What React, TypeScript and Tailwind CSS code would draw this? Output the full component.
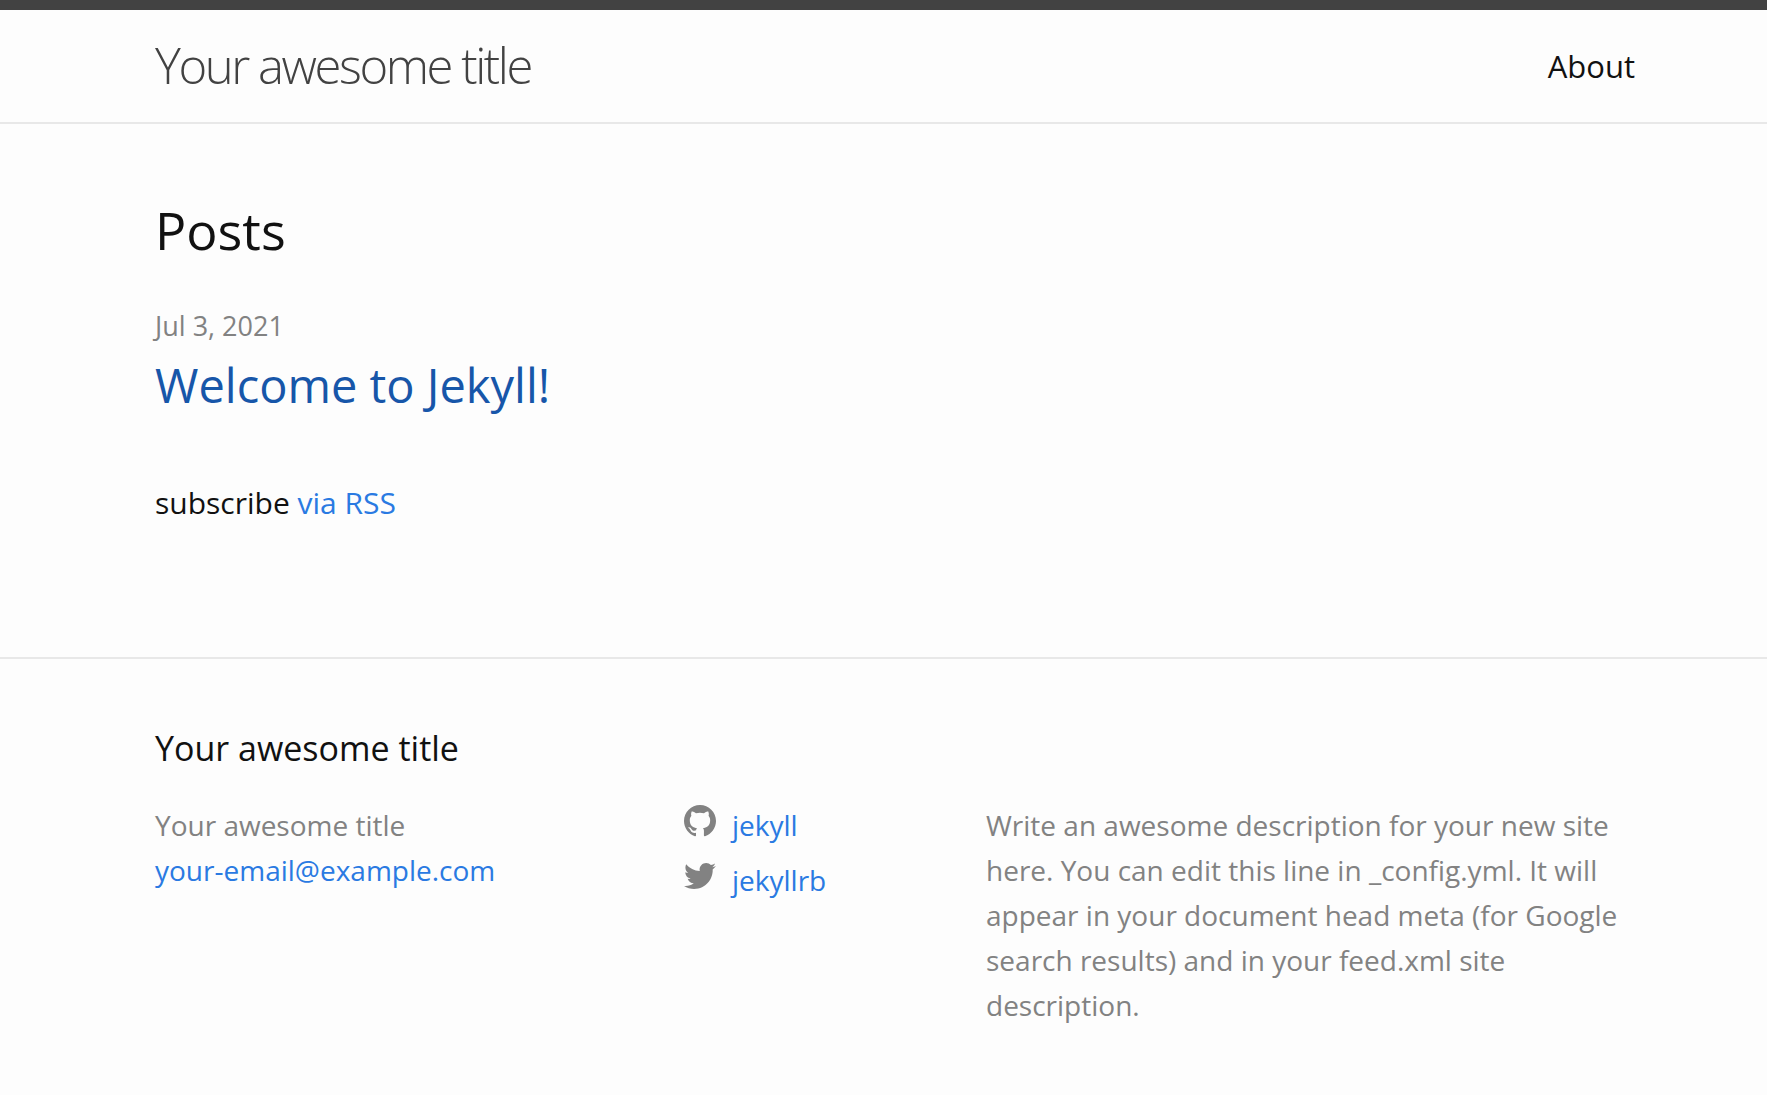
const description =
  "Write an awesome description for your new site here. You can edit this line in _config.yml. It will appear in your document head meta (for Google search results) and in your feed.xml site description.";

const github =
  "M8 0C3.58 0 0 3.582 0 8c0 3.535 2.292 6.533 5.47 7.59.4.075.547-.172.547-.385 0-.19-.007-.693-.01-1.36-2.226.483-2.695-1.073-2.695-1.073-.364-.924-.89-1.17-.89-1.17-.725-.496.056-.486.056-.486.803.056 1.225.824 1.225.824.714 1.223 1.873.87 2.33.665.072-.517.278-.87.507-1.07-1.777-.2-3.644-.888-3.644-3.953 0-.873.31-1.587.823-2.147-.09-.202-.36-1.015.07-2.117 0 0 .67-.215 2.2.82.64-.178 1.32-.266 2-.27.68.004 1.36.092 2 .27 1.52-1.035 2.19-.82 2.19-.82.43 1.102.16 1.915.08 2.117.51.56.82 1.274.82 2.147 0 3.073-1.87 3.75-3.65 3.947.28.24.54.73.54 1.48 0 1.07-.01 1.93-.01 2.19 0 .21.14.46.55.38C13.71 14.53 16 11.53 16 8c0-4.418-3.582-8-8-8";
const twitter =
  "M15.969 3.058c-.586.26-1.217.436-1.878.515.675-.405 1.194-1.045 1.438-1.809-.632.375-1.332.647-2.076.793-.596-.636-1.446-1.033-2.387-1.033-1.806 0-3.27 1.464-3.27 3.27 0 .256.029.506.085.745-2.718-.136-5.127-1.438-6.74-3.416-.281.483-.443 1.045-.443 1.644 0 1.134.577 2.135 1.455 2.722-.536-.017-1.04-.164-1.481-.409v.041c0 1.584 1.127 2.906 2.623 3.206-.274.075-.563.115-.861.115-.211 0-.416-.02-.615-.059.416 1.299 1.624 2.245 3.055 2.271-1.119.877-2.529 1.4-4.061 1.4-.264 0-.524-.015-.78-.046 1.447.928 3.166 1.469 5.013 1.469 6.015 0 9.304-4.983 9.304-9.304 0-.142-.003-.283-.009-.423.639-.461 1.193-1.037 1.632-1.692z";

function Social({ name, path }: { name: string; path: string }) {
  return (
    <li className="h-[55px]">
      <a href={"#" + name} className="flex gap-4 text-[#2a7ae2]">
        <svg viewBox="0 0 16 16" aria-hidden="true" className="mt-[2px] size-8 fill-[#828282]">
          <path d={path} />
        </svg>
        <span>{name}</span>
      </a>
    </li>
  );
}

export default function App() {
  return (
    <div className="min-h-screen bg-[#fdfdfd] font-['Open_Sans','Noto_Sans',sans-serif] text-[#111]">
      <header className="border-t-10 border-b-2 border-t-[#424242] border-b-[#e8e8e8]">
        <div className="flex h-28 items-center justify-between pr-[132px] pl-[155px]">
          <a href="#home" className="text-[49px] font-light tracking-tighter text-[#424242]">
            Your awesome title
          </a>
          <nav>
            <a href="#about" className="text-[31px]">About</a>
          </nav>
        </div>
      </header>
      <main className="px-[155px] pt-[68px] pb-[130px]">
        <h1 className="text-[52px] leading-[76px]">Posts</h1>
        <ul className="mt-10">
          <li>
            <time className="block text-[27px] leading-9 text-[#828282]">Jul 3, 2021</time>
            <h2 className="mt-[6px] text-[47px] leading-[70px]">
              <a href="#welcome" className="text-[#1756a9]">Welcome to Jekyll!</a>
            </h2>
          </li>
        </ul>
        <p className="mt-[59px] text-[30px] leading-12">
          subscribe <a href="#rss" className="text-[#2a7ae2]">via RSS</a>
        </p>
      </main>
      <footer className="border-t-2 border-[#e8e8e8] pt-[65px] pr-[132px] pb-14 pl-[155px]">
        <h2 className="text-[34px] leading-12">Your awesome title</h2>
        <div className="mt-[31px] grid grid-cols-[529fr_302fr_649fr] text-[28px] leading-[45px] text-[#828282]">
          <ul>
            <li>Your awesome title</li>
            <li><a href="mailto:your-email@example.com" className="text-[#2a7ae2]">your-email@example.com</a></li>
          </ul>
          <ul>
            <Social name="jekyll" path={github} />
            <Social name="jekyllrb" path={twitter} />
          </ul>
          <p>{description}</p>
        </div>
      </footer>
    </div>
  );
}
